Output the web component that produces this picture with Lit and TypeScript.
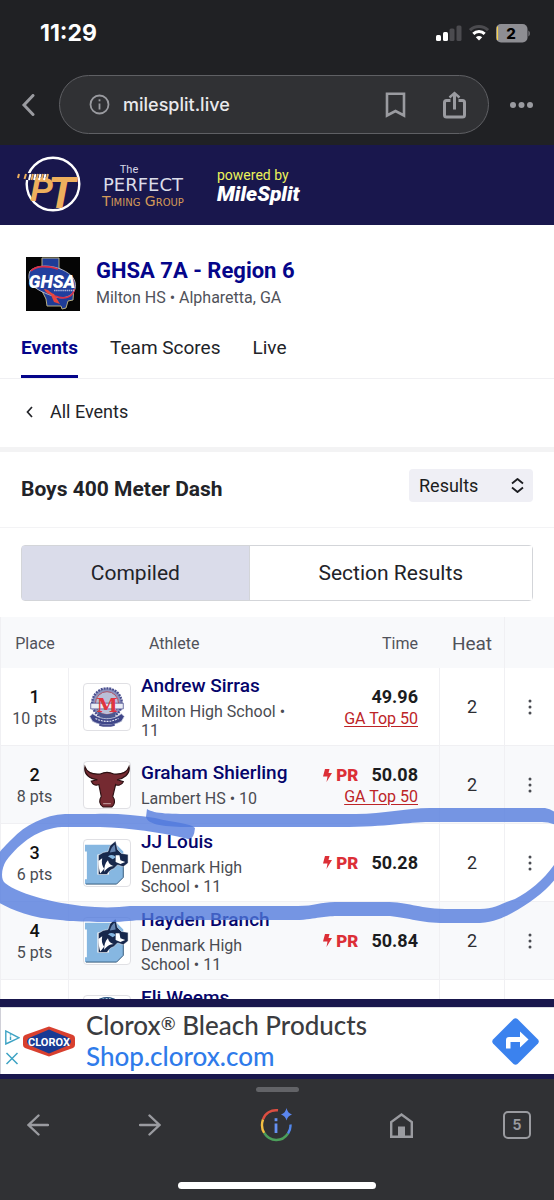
import { LitElement, html, svg, css, nothing } from "lit";
import { customElement, state } from "lit/decorators.js";

type Crest = "eagle" | "longhorn" | "dane" | "seal";

interface Result {
  place: number;
  points: number;
  crest: Crest;
  name: string;
  school: string;
  grade: string;
  time: string;
  pr: boolean;
  top50: boolean;
  heat: number;
}

const RESULTS: Result[] = [
  { place: 1, points: 10, crest: "eagle", name: "Andrew Sirras", school: "Milton High School", grade: "11", time: "49.96", pr: false, top50: true, heat: 2 },
  { place: 2, points: 8, crest: "longhorn", name: "Graham Shierling", school: "Lambert HS", grade: "10", time: "50.08", pr: true, top50: true, heat: 2 },
  { place: 3, points: 6, crest: "dane", name: "JJ Louis", school: "Denmark High School", grade: "11", time: "50.28", pr: true, top50: false, heat: 2 },
  { place: 4, points: 5, crest: "dane", name: "Hayden Branch", school: "Denmark High School", grade: "11", time: "50.84", pr: true, top50: false, heat: 2 },
  { place: 5, points: 4, crest: "seal", name: "Eli Weems", school: "West Forsyth High School", grade: "12", time: "51.02", pr: true, top50: false, heat: 2 },
];

const crests = {
  eagle: svg`
    <circle cx="24" cy="20" r="15.500" fill="#8d92bd" />
    <circle cx="24" cy="20" r="15.500" fill="none" stroke="#4a4f8f" stroke-width="2.400" stroke-dasharray="2 1" />
    <circle cx="24" cy="20" r="12" fill="#b9bfd8" stroke="#b05062" stroke-width="1" />
    <path d="M7 20h34v6H7z" fill="#e9ecf5" stroke="#4a4f8f" stroke-width=".8" />
    <path d="M14 28c6 5 14 5 20 0l-3 8H17z" fill="#4c568f" />
    <text x="24" y="29" text-anchor="middle" font-family="DejaVu Serif" font-weight="700" font-size="20" fill="#e03540">M</text>
    <path d="M9 31c9 7 21 7 30 0l3 3-3 5c-9 5-21 5-30 0l-3-5z" fill="#3f4688" stroke="#c9cde0" stroke-width=".8" />
    <path d="M12 36c8 4 16 4 24 0" stroke="#e6e8f3" stroke-width="1.200" stroke-dasharray="2 1" fill="none" />
    <path d="M16 42.500c5 1.500 11 1.500 16 0" stroke="#4a4f8f" stroke-width="2" fill="none" />`,
  longhorn: svg`
    <path d="M1 5C3 11 10 13 17 12.500C21 10.500 27 10.500 31 12.500C38 13 45 11 47 5C48.500 13 41 17.500 34.500 18.500L41 20.500C39 24.500 35 25 33 23.500L30 36C33 40 32 45 29 47H20C16 45 15.500 40 18 36L15.500 23.500C12 25 9 24 7.500 20L14 18.500C6 17.500 -.5 13 1 5Z" fill="#752a31" stroke="#2c1113" stroke-width="1.200" />
    <path d="M20 43.500h8" stroke="#e2caca" stroke-width=".8" fill="none" />`,
  dane: svg`
    <path d="M1 5h33l7 7v27l-7 7H1v-5h2V12H1z" fill="#86b7e1" />
    <path d="M2 46h32l7-7V22" fill="none" stroke="#315779" stroke-width="1" />
    <path d="M14 15h12v21H14z" fill="#fff" />
    <path d="M15 36V16l5-3 5-1 2-6 6-5 2 9 4 4 7 1v9l-5 4-6-2-4 4c-4 1-5 3-7 6H15z" fill="#17284c" stroke="#fff" stroke-width=".5" />
    <path d="M15 22l4-3c-1 5 0 8 2 11l-4 5c-1-3-2-8-2-13z" fill="#fff" />
    <path d="M25 21c1 4 3 5 6 6-4 0-8 3-10 6 0-5 1-9 4-12z" fill="#fff" />
    <path d="M33 16l4 0 1 5 5 2-5 2-5-2z" fill="#fff" />
    <path d="M27 13c1-4 3-7 5-8l1 7z" fill="#6584b0" />
    <path d="M25 17c3-2 6-2 8 1l-3 2z" fill="#86b7e1" />`,
  seal: svg`
    <circle cx="24" cy="19" r="18" fill="#28517f" />
    <circle cx="24" cy="19" r="16" fill="none" stroke="#a9c5d9" stroke-width="2" stroke-dasharray="2 1.500" />
    <circle cx="24" cy="20" r="12" fill="#e8f0f6" />`,
};

@customElement("browser-chrome")
class BrowserChrome extends LitElement {
  static styles = css`
    :host { display: block; background: #202124; color: #fff; font-family: Inter, sans-serif; }
    button { appearance: none; border: 0; background: none; padding: 0; color: #9a9ba0; display: flex; }
    svg { display: block; }
    .status { display: flex; justify-content: space-between; align-items: center; height: 66px; padding: 0 24px 0 40px; }
    .clock { font-size: 23px; font-weight: 700; line-height: 24px; }
    .signals { display: flex; align-items: center; gap: 7px; }
    .address { display: flex; align-items: center; gap: 24px; padding: 9px 20px 11px 21px; }
    .pill { flex: 1; display: flex; align-items: center; box-sizing: border-box; height: 59px; margin-right: -4px; padding: 0 22px 0 29px; border: 1px solid #5f6064; border-radius: 30px; background: #303134; }
    .host { flex: 1; margin-left: 13px; font-size: 18px; font-weight: 500; line-height: 24px; color: #e9e9ec; }
    .pill .save { margin-right: 37px; }
  `;

  render() {
    return html`
      <div class="status">
        <span class="clock">11:29</span>
        <div class="signals">
          <svg width="26" height="18" viewBox="0 0 26 18">
            <rect x="0" y="11" width="5" height="6" rx="1.500" fill="#fff" />
            <rect x="7" y="8" width="5" height="9" rx="1.500" fill="#fff" />
            <rect x="13.500" y="4.500" width="5" height="12.500" rx="1.500" fill="#4b4b4f" />
            <rect x="20.500" y="1.500" width="5" height="15.500" rx="1.500" fill="#4b4b4f" />
          </svg>
          <svg width="20" height="16" viewBox="0 0 20 16">
            <path d="M1 5.200C6 .4 14 .4 19 5.200" fill="none" stroke="#4b4b4f" stroke-width="3" />
            <path d="M4.300 8.800c3.200-3 8.200-3 11.400 0" fill="none" stroke="#fff" stroke-width="3" />
            <path d="M6.800 12.200c1.800-1.600 4.600-1.600 6.400 0L10 15.600z" fill="#fff" />
          </svg>
          <svg width="34" height="19" viewBox="0 0 34 19">
            <rect width="31.500" height="18.500" rx="5" fill="#8e8e93" />
            <path d="M1.500 2.500v13.500" stroke="#f5cf4b" stroke-width="1.200" />
            <path d="M32.500 6.500c1.600.8 1.600 5.200 0 6z" fill="#8e8e93" />
            <text x="15" y="14.800" text-anchor="middle" font-family="Inter" font-weight="800" font-size="15" fill="#000">2</text>
          </svg>
        </div>
      </div>
      <div class="address">
        <button aria-label="Back">
          <svg width="14" height="22" viewBox="0 0 14 22" fill="none" stroke="currentColor" stroke-width="3"><path d="M12 1.500 3 11l9 9.500" stroke-linecap="round" /></svg>
        </button>
        <div class="pill">
          <button aria-label="Site information">
            <svg width="21" height="21" viewBox="0 0 21 21" fill="none" stroke="currentColor" stroke-width="1.800"><circle cx="10.500" cy="10.500" r="9" /><path d="M10.500 9.500v6" /><path d="M10.500 5.300v2" /></svg>
          </button>
          <span class="host">milesplit.live</span>
          <button class="save" aria-label="Bookmark">
            <svg width="21" height="26" viewBox="0 0 21 26" fill="none" stroke="currentColor" stroke-width="2.600"><path d="M2 1.800h17v21.700l-8.500-4.500L2 23.500z" /></svg>
          </button>
          <button aria-label="Share">
            <svg width="23" height="28" viewBox="0 0 23 28" fill="none" stroke="currentColor" stroke-width="3"><path d="M7.500 9.500H3.500q-2 0-2 2v12.500q0 2 2 2h16q2 0 2-2V11.500q0-2-2-2h-4" /><path d="M11.500 18.500V2.500" /><path d="m6.500 6.500 5-4.500 5 4.500" stroke-width="2.400" /></svg>
          </button>
        </div>
        <button aria-label="More">
          <svg width="25" height="8" viewBox="0 0 25 8" fill="currentColor"><circle cx="4" cy="4" r="3" /><circle cx="12.500" cy="4" r="3" /><circle cx="21" cy="4" r="3" /></svg>
        </button>
      </div>
    `;
  }
}

@customElement("sponsor-banner")
class SponsorBanner extends LitElement {
  static styles = css`
    :host { display: flex; align-items: center; height: 80px; background: #19174d; color: #fff; overflow: hidden; }
    .badge { display: block; flex: none; width: 66px; height: 62px; margin-left: 17px; }
    .timing { width: 120px; display: flex; flex-direction: column; align-items: center; }
    .the { font: 11px/13px Roboto, sans-serif; color: #d5d6e6; margin-right: 28px; }
    .perfect { font: 18px/18px "DejaVu Sans", sans-serif; color: #dcdde9; }
    .group { font: small-caps 14px/14px "DejaVu Sans", sans-serif; color: #d49a58; white-space: nowrap; }
    .powered { margin-left: 14px; }
    .by { font: 14px/18px Roboto, sans-serif; color: #edf25a; }
    .brand { font: italic 900 21px/21px Roboto, sans-serif; }
  `;

  render() {
    return html`
      <svg class="badge" viewBox="0 0 66 62">
        <circle cx="36" cy="30" r="26.300" fill="none" stroke="#fff" stroke-width="2.400" />
        <path d="M0 19h14v7H0z" fill="#19174d" />
        <text x="13" y="47" font-family="Liberation Sans" font-style="italic" font-weight="700" font-size="34" fill="#eeb05d">P</text>
        <text x="31" y="54" font-family="Liberation Sans" font-style="italic" font-weight="700" font-size="44" fill="#eeb05d">T</text>
        <path d="M12 26l1.500-6M17 26l1.500-6M22 26l1.500-6M27 26l1.500-6" stroke="#fff" stroke-width="2" />
        <path d="M1 24l1-4M7.500 25l1.500-5M14.500 26l1.500-6M19.500 26l1.500-6M24.500 26l1.500-6M29.500 26l1.500-6" stroke="#eeb05d" stroke-width="2" />
      </svg>
      <div class="timing">
        <span class="the">The</span>
        <span class="perfect">PERFECT</span>
        <span class="group">Timing Group</span>
      </div>
      <div class="powered">
        <div class="by">powered by</div>
        <div class="brand">MileSplit</div>
      </div>
    `;
  }
}

@customElement("results-table")
class ResultsTable extends LitElement {
  static styles = css`
    :host { display: block; position: relative; font-family: Roboto, sans-serif; }
    table { width: 100%; border-collapse: separate; border-spacing: 0; table-layout: fixed; }
    th { height: 51px; padding: 2px 0 0; box-sizing: border-box; font-size: 16px; font-weight: 400; color: #50525a; text-align: left; }
    tr { background: #fff; }
    thead tr, tbody tr:nth-child(even) { background: #f8f9fb; }
    td { height: 78px; padding: 0; box-sizing: border-box; border-bottom: 1px solid #f0f0f3; }
    .c-place { width: 69px; }
    .c-time { width: 145px; }
    .c-heat { width: 65px; }
    .c-menu { width: 49px; }
    .place { text-align: center; border-right: 1px solid #f0f0f3; border-left: 1px solid #f0f0f3; }
    td.place { padding-top: 3px; }
    th.place { border-right: 0; }
    .h-athlete { padding-left: 80px; }
    .time { text-align: right; padding-right: 22px; }
    td.time { border-right: 1px solid #f0f0f3; padding-right: 21px; }
    td.ranked { padding-top: 3px; }
    .heat { text-align: center; border-right: 1px solid #f0f0f3; font-size: 18px; }
    th.heat { font-size: 19px; }
    td.heat { color: #2d2e33; }
    .rank { font-size: 18px; line-height: 22px; font-weight: 500; color: #111; }
    .small { font-size: 16px; line-height: 22px; color: #4a4c52; }
    .athlete { display: flex; align-items: center; gap: 10px; padding: 0 6px 0 14px; }
    .crest { flex: none; width: 48px; height: 48px; box-sizing: border-box; border: 1px solid #e0e0e4; border-radius: 4px; overflow: hidden; background: #fff; display: block; }
    .name { display: block; margin-bottom: 4px; font-size: 19px; line-height: 24px; font-weight: 500; color: #05056b; text-decoration: none; white-space: nowrap; }
    .school { font-size: 16px; line-height: 19px; color: #4a4c52; }
    .mark { display: flex; justify-content: flex-end; align-items: center; font-size: 18px; line-height: 22px; font-weight: 700; color: #1b1c20; }
    .pr { display: flex; align-items: center; gap: 4px; margin-right: 13px; font-size: 17px; font-weight: 900; color: #dc2f37; }
    .top { font-size: 16px; line-height: 22px; color: #bd2427; text-decoration: underline; text-underline-offset: 2px; }
    .more { appearance: none; border: 0; background: none; display: block; margin: 0 auto; padding: 12px 10px; color: #4a4c52; }
    .more svg { display: block; }
    .marker { position: absolute; left: 0; top: 0; width: 100%; height: 382px; pointer-events: none; }
  `;

  private row(r: Result) {
    return html`
      <tr>
        <td class="place"><div class="rank">${r.place}</div><div class="small">${`${r.points} pts`}</div></td>
        <td>
          <div class="athlete">
            <svg class="crest" viewBox="0 0 48 48">${crests[r.crest]}</svg>
            <div>
              <a class="name" href="#athlete-${r.place}">${r.name}</a>
              <div class="school">${`${r.school} • ${r.grade}`}</div>
            </div>
          </div>
        </td>
        <td class=${r.top50 ? "time ranked" : "time"}>
          <div class="mark">
            ${r.pr
              ? html`<span class="pr"><svg width="9" height="13" viewBox="0 0 9 13"><path d="M2 0h4.500L5.500 4H9L3.500 13 4.500 7.500H0z" fill="currentColor" /></svg>PR</span>`
              : nothing}
            <span>${r.time}</span>
          </div>
          ${r.top50 ? html`<a class="top" href="#top-50">GA Top 50</a>` : nothing}
        </td>
        <td class="heat">${r.heat}</td>
        <td>
          <button class="more" aria-label="More about ${r.name}">
            <svg width="4" height="16" viewBox="0 0 4 16" fill="currentColor"><circle cx="2" cy="2" r="1.500" /><circle cx="2" cy="8" r="1.500" /><circle cx="2" cy="14" r="1.500" /></svg>
          </button>
        </td>
      </tr>
    `;
  }

  render() {
    return html`
      <table>
        <colgroup><col class="c-place" /><col /><col class="c-time" /><col class="c-heat" /><col class="c-menu" /></colgroup>
        <thead>
          <tr><th class="place">Place</th><th class="h-athlete">Athlete</th><th class="time">Time</th><th class="heat">Heat</th><th></th></tr>
        </thead>
        <tbody>${RESULTS.map((r) => this.row(r))}</tbody>
      </table>
      <svg class="marker" viewBox="0 0 554 382" preserveAspectRatio="none">
        <path d="M147 192C155 197 170 197 200 197H356C385 197 405 191 430 191H545Q551 192 556 196V208Q549 205 542 205H430C405 205 390 210 340 210H190C165 210 148 208 146 200Z" fill="#4f78dc" opacity=".78" />
        <path d="M195 211C190 206 175 206 155 201C135 198 115 196 95 197H65C45 198 25 208 12 222C4 230 0 234 -2 238V285C10 292 30 301 60 303C75 305 105 305 115 305C130 304 135 303 150 303H300C320 301 325 299 340 299H390C410 301 420 306 445 306H480C495 305 505 300 512 296C530 286 545 275 556 261V245C545 262 530 274 515 282C500 287 495 292 480 292H445C415 291 410 285 385 285H335C320 285 315 289 298 289H130C120 290 110 291 95 290C60 288 20 278 5 266C0 262 2 250 6 244C20 225 40 211 62 210H100C130 211 160 215 188 222Q194 223 195 211Z" fill="#4f78dc" opacity=".78" />
      </svg>
    `;
  }
}

@customElement("meet-page")
class MeetPage extends LitElement {
  @state() private view = "Compiled";

  static styles = css`
    :host { display: block; background: #fff; font-family: Roboto, sans-serif; color: #222328; }
    a { text-decoration: none; color: inherit; }
    svg { display: block; }
    .meet { display: flex; align-items: center; gap: 16px; padding: 32px 21px 13px 26px; }
    .meet h1 { margin: 0; font-size: 22px; line-height: 26px; font-weight: 700; color: #05058a; }
    .meet p { margin: 2px 0 0; font-size: 16px; line-height: 24px; color: #50525a; }
    .logo { flex: none; }
    .tabs { display: flex; gap: 32px; padding: 0 21px; border-bottom: 1px solid #f0f0f3; font-size: 19px; line-height: 24px; }
    .tab { padding: 12px 0 15px; border-bottom: 3px solid transparent; }
    .tab.on { font-weight: 700; color: #05058a; border-color: #05058a; }
    .back { display: flex; align-items: center; gap: 17px; padding: 21px 26px 23px; font-size: 18px; line-height: 24px; border-bottom: 5px solid #f3f3f4; }
    .event { display: flex; justify-content: space-between; align-items: flex-start; padding: 17px 21px 25px; border-bottom: 1px solid #f3f3f5; }
    .event h2 { margin: 0; padding-top: 7px; font-size: 21px; line-height: 26px; font-weight: 700; }
    .picker { position: relative; }
    .picker select { appearance: none; width: 124px; height: 33px; padding: 0 10px; border: 0; border-radius: 4px; background: #efeff5; color: #1b1c20; font: 18px/24px Roboto, sans-serif; }
    .picker svg { position: absolute; right: 9px; top: 9px; pointer-events: none; }
    .views { display: flex; margin: 17px 21px 16px; border: 1px solid #d3d5d9; border-radius: 4px; }
    .views button { flex: 1 1 auto; appearance: none; border: 0; background: #fff; height: 54px; padding: 0; font: 21px/26px Roboto, sans-serif; color: #222328; }
    .views button + button { border-left: 1px solid #d3d5d9; }
    .views .on { background: #dadcea; }
  `;

  render() {
    return html`
      <header class="meet">
        <svg class="logo" width="54" height="54" viewBox="0 0 54 54">
          <rect width="54" height="54" fill="#050505" />
          <path d="M16 1h17v10l6 5 9 13-1 14-5 1-2 7-4 1-1-3H21l-1-7-4-8V17z" fill="#1e3c97" stroke="#b6ae83" stroke-width="1" />
          <path d="M4 14C16 3 46 12 49 25 52 37 40 43 30 40 17 36-2 29 4 14z" fill="#223f9e" stroke="#cfcfcf" stroke-width=".8" />
          <path d="M5 14C10 8 23 9 32 12M29 39c9 4 19 1 19-7" fill="none" stroke="#d9304a" stroke-width="1.600" />
          <text x="26" y="30.500" text-anchor="middle" font-family="Roboto" font-style="italic" font-weight="900" font-size="18" fill="#fff">GHSA</text>
          <path d="M18 32c5 0 6 4 10 5l6 10-6-2-3-7c-3-1-6-3-7-6z" fill="#e8463f" />
          <path d="M28 33.500h20" stroke="#aab4da" stroke-width="1.400" stroke-dasharray="1.500 .6" />
        </svg>
        <div>
          <h1>GHSA 7A - Region 6</h1>
          <p>Milton HS • Alpharetta, GA</p>
        </div>
      </header>
      <nav class="tabs">
        <a class="tab on" href="#events">Events</a>
        <a class="tab" href="#scores">Team Scores</a>
        <a class="tab" href="#live">Live</a>
      </nav>
      <a class="back" href="#events">
        <svg width="7" height="12" viewBox="0 0 7 12" fill="none" stroke="currentColor" stroke-width="1.700"><path d="M6 1 1.500 6 6 11" /></svg>
        All Events
      </a>
      <section class="event">
        <h2>Boys 400 Meter Dash</h2>
        <div class="picker">
          <select aria-label="Show"><option>Results</option></select>
          <svg width="13" height="15" viewBox="0 0 13 15" fill="none" stroke="#1b1c20" stroke-width="1.800" stroke-linejoin="round"><path d="m1 5.500 5.500-4.500L12 5.500M1 9.500 6.500 14 12 9.500" /></svg>
        </div>
      </section>
      <div class="views">
        ${["Compiled", "Section Results"].map(
          (v) => html`<button class=${this.view === v ? "on" : ""} @click=${() => (this.view = v)}>${v}</button>`
        )}
      </div>
      <results-table></results-table>
    `;
  }
}

@customElement("ad-strip")
class AdStrip extends LitElement {
  static styles = css`
    :host { display: block; background: #19174d; padding: 8px 0 5px; }
    .ad { display: flex; align-items: center; height: 67px; box-sizing: border-box; padding: 0 15px 0 4px; background: #fff; border-top: 1px solid #dcdce2; border-left: 1px solid #d0d0d8; }
    svg { display: block; flex: none; }
    .choices { display: flex; flex-direction: column; gap: 7px; padding-top: 12px; margin-right: 3px; }
    .copy { flex: 1; margin-left: 11px; font: 500 26px/31px Lato, sans-serif; color: #3b3c40; text-decoration: none; }
    .copy div { white-space: nowrap; }
    .reg { font-size: 18px; line-height: 18px; vertical-align: 5px; }
    .url { color: #2f7bea; }
    button { appearance: none; border: 0; background: none; padding: 0; }
  `;

  render() {
    return html`
      <div class="ad">
        <div class="choices">
          <svg width="15" height="15" viewBox="0 0 15 15" fill="none" stroke="#3ea3c4" stroke-width="1.400"><path d="M.8 1v13L4 12.500 14 7.800z" /><path d="M5.500 6.500V10M5.500 4.200v1.200" /></svg>
          <button aria-label="Close ad"><svg width="14" height="13" viewBox="0 0 14 13" fill="none" stroke="#3ea3c4" stroke-width="1.500"><path d="m1.500 1 11 11M12.500 1l-11 11" /></svg></button>
        </div>
        <svg width="52" height="31" viewBox="0 0 52 31">
          <path d="M26 .5 50 9q2 1 2 3v7q0 2-2 3L26 30.500 2 22q-2-1-2-3v-7q0-2 2-3z" fill="#d8402f" />
          <path d="M26 3.500 46 12q4 3.500 0 7L26 27.500 6 19q-4-3.500 0-7z" fill="#173a94" />
          <text x="26" y="19.500" text-anchor="middle" font-family="Roboto" font-size="11" font-weight="700" fill="#fff">CLOROX</text>
        </svg>
        <a class="copy" href="#ad">
          <div>Clorox<span class="reg">®</span> Bleach Products</div>
          <div class="url">Shop.clorox.com</div>
        </a>
        <svg width="47" height="47" viewBox="0 0 47 47">
          <path d="M21.500 1q2-1.500 4 0L46 21.500q1.500 2 0 4L25.500 46q-2 1.500-4 0L1 25.500q-1.500-2 0-4z" fill="#3b82ee" />
          <path d="M14 30.500V22q0-3 3-3h11v-5.500l8.500 8-8.500 8V24h-9.500v6.500z" fill="#fff" />
        </svg>
      </div>
    `;
  }
}

@customElement("browser-toolbar")
class BrowserToolbar extends LitElement {
  static styles = css`
    :host { display: flex; flex-direction: column; align-items: center; height: 121px; background: #303134; }
    .handle { width: 43px; height: 5px; margin-top: 8px; border-radius: 3px; background: #626367; }
    .keys { align-self: stretch; display: flex; justify-content: space-between; align-items: center; height: 34px; margin-top: 16px; padding: 0 23px 0 27px; }
    button { appearance: none; border: 0; background: none; padding: 0; color: #9a9ba0; }
    svg { display: block; }
    .lens { padding: 0 8px; }
    .tabs { box-sizing: border-box; width: 28px; height: 28px; border: 2px solid #9a9ba0; border-radius: 5px; font: 700 14px/24px Inter, sans-serif; text-align: center; }
    .home { width: 198px; height: 7px; margin-top: 40px; border-radius: 4px; background: #fff; }
  `;

  render() {
    return html`
      <div class="handle"></div>
      <div class="keys">
        <button aria-label="Back"><svg width="22" height="22" viewBox="0 0 22 22" fill="none" stroke="currentColor" stroke-width="2.400" stroke-linecap="round"><path d="M21 11H2M11.500 1.500 1.500 11l10 9.500" /></svg></button>
        <button aria-label="Forward"><svg width="22" height="22" viewBox="0 0 22 22" fill="none" stroke="currentColor" stroke-width="2.400" stroke-linecap="round"><path d="M1 11h19M10.500 1.500l10 9.500-10 9.500" /></svg></button>
        <button class="lens" aria-label="Page insights">
          <svg width="32" height="34" viewBox="0 0 32 34" fill="none" stroke-width="2.400">
            <path d="M18 2.300C11 1.500 5 5 3 11.500" stroke="#dc4e41" />
            <path d="M3 11.500c-1.800 5-1.200 9.500 1.200 13.500" stroke="#f4bf42" />
            <path d="M4.200 25C10 34 22 34.500 28 25.500" stroke="#4c9f5b" />
            <path d="M28 25.500c2-3 2.800-6 2.400-9" stroke="#5187ec" />
            <path d="M16 15.500v9.500" stroke="#6691f3" stroke-width="2.800" /><path d="M16 10.200v3" stroke="#6691f3" stroke-width="2.800" />
            <path d="M26.500 0q1 5 5.500 6.500-4.500 1.500-5.500 6-1-4.500-5.500-6Q25.500 5 26.500 0z" fill="#5b86ee" />
          </svg>
        </button>
        <button aria-label="Home"><svg width="23" height="25" viewBox="0 0 23 25"><path d="M1.200 23.800V9L11.500 1.500 21.800 9v14.800z" fill="none" stroke="currentColor" stroke-width="2.400" /><path d="M8 13.500h7V24H8z" fill="currentColor" /></svg></button>
        <button class="tabs" aria-label="5 open tabs">5</button>
      </div>
      <div class="home"></div>
    `;
  }
}

@customElement("app-root")
class AppRoot extends LitElement {
  static styles = css`
    :host { display: flex; flex-direction: column; height: 100vh; background: #fff; }
    .page { flex: 1; min-height: 0; overflow: hidden; }
  `;

  render() {
    return html`
      <browser-chrome></browser-chrome>
      <div class="page">
        <sponsor-banner></sponsor-banner>
        <meet-page></meet-page>
      </div>
      <ad-strip></ad-strip>
      <browser-toolbar></browser-toolbar>
    `;
  }
}
